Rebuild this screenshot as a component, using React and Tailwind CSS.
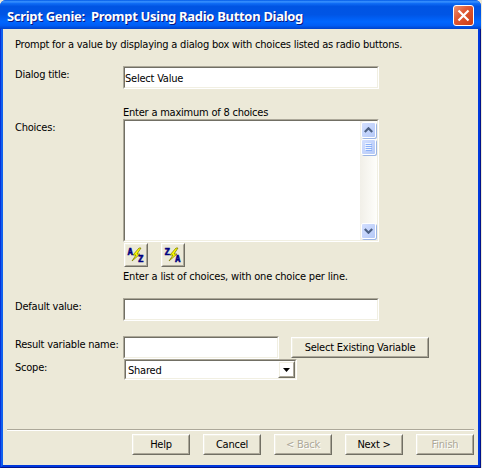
import React from 'react';

const sunken = 'border border-t-[#aca899] border-l-[#aca899] border-r-white border-b-white';
const sunkenInner = 'h-full w-full bg-white border border-t-[#716f64] border-l-[#716f64] border-r-[#f1efe2] border-b-[#f1efe2]';

function Field({ className, children }) {
  return (
    <div className={`${sunken} ${className}`}>
      <div className={`${sunkenInner} flex items-center`}>{children}</div>
    </div>
  );
}

function Button({ className, disabled, children }) {
  return (
    <button className={`border border-t-white border-l-white border-r-[#716f64] border-b-[#716f64] ${className}`}>
      <span className={`flex h-full w-full items-center justify-center border border-t-[#f1efe2] border-l-[#f1efe2] border-r-[#aca899] border-b-[#aca899] whitespace-pre ${disabled ? 'text-[#aca899] [text-shadow:1px_1px_0_#fff]' : ''}`}>
        {children}
      </span>
    </button>
  );
}

function SortIcon({ first, second }) {
  return (
    <svg width="20" height="20" viewBox="0 0 20 20">
      <path d="M13 3 L7 10 H10 L6 16 L14 9 H11 L15 3 Z" fill="#ffff00" stroke="#808000" strokeWidth="0.8" />
      <text x="1.5" y="9.5" fontSize="9" fontWeight="bold" fontFamily="DejaVu Sans Mono" fill="#000080" stroke="#000080" strokeWidth="0.5">{first}</text>
      <text x="12" y="17" fontSize="9" fontWeight="bold" fontFamily="DejaVu Sans Mono" fill="#000080" stroke="#000080" strokeWidth="0.5">{second}</text>
    </svg>
  );
}

function ScrollButton({ children, className }) {
  return (
    <div className={`w-[15px] shrink-0 rounded-[2px] border border-white bg-gradient-to-br from-[#d3dfff] to-[#b5c9f7] shadow-[1px_1px_0_#9cb5e4] flex items-center justify-center ${className}`}>
      {children}
    </div>
  );
}

export default function App() {
  return (
    <div className="flex h-[468px] w-[482px] bg-[#ece9d8] font-['DejaVu_Sans_Condensed','DejaVu_Sans',sans-serif] text-[11px] leading-[15px] tracking-[-0.22px] text-black [font-stretch:condensed]">
      <div className="flex w-[481px] flex-col overflow-hidden rounded-t-[6px] bg-[#0a3fdc]">
        <header className="flex h-[29px] shrink-0 items-center justify-between bg-[linear-gradient(180deg,#0058e6_0%,#3a93ff_6%,#0f6cf5_12%,#0054e3_22%,#0055e5_50%,#0066ff_75%,#005df5_88%,#0042c9_100%)] pl-[7px] pr-[7px] pt-[2px]">
          <span className="whitespace-pre pt-px font-['Noto_Sans',sans-serif] text-[13px] font-bold tracking-[-0.3px] text-white [font-stretch:normal] [text-shadow:1px_1px_0_#0a1883]">Script Genie:  Prompt Using Radio Button Dialog</span>
          <svg width="21" height="21" viewBox="0 0 21 21">
            <defs>
              <linearGradient id="close" x1="0" y1="0" x2="1" y2="1">
                <stop offset="0" stopColor="#ee9678" />
                <stop offset="0.4" stopColor="#e05a35" />
                <stop offset="1" stopColor="#c93a12" />
              </linearGradient>
            </defs>
            <rect x="0.5" y="0.5" width="20" height="20" rx="2.5" fill="url(#close)" stroke="#fff" />
            <path d="M5.5 5.5 L15.5 15.5 M15.5 5.5 L5.5 15.5" stroke="#fff" strokeWidth="2.2" />
          </svg>
        </header>
        <div className="flex min-h-0 flex-1 border-x border-b border-l-[#0831d9] border-r-[#00138c] border-b-[#00138c]">
          <div className="flex flex-1 border-x-2 border-b-2 border-l-[#0f60ee] border-r-[#0038dc] border-b-[#0038dc]">
            <main className="flex w-[475px] flex-col bg-[#ece9d8] pl-3">
              <p className="mt-[8px] whitespace-nowrap">Prompt for a value by displaying a dialog box with choices listed as radio buttons.</p>
              <div className="mt-[14px] flex h-[23px]">
                <label className="w-[108px] pt-px">Dialog title:</label>
                <Field className="h-[23px] w-[256px]"><span className="pt-px">Select Value</span></Field>
              </div>
              <div className="mt-[15px] flex">
                <label className="w-[108px] pt-[16px]">Choices:</label>
                <div>
                  <div className="h-[15px] leading-[17px]">Enter a maximum of 8 choices</div>
                  <Field className="h-[123px] w-[256px]">
                    <div className="ml-auto flex h-full w-[17px] flex-col items-center bg-gradient-to-r from-[#f1efe8] to-[#fefefb] py-px">
                      <ScrollButton className="h-[16px]">
                        <svg width="9" height="6" viewBox="0 0 9 6"><path d="M0.8 5 L4.5 1.3 L8.2 5" fill="none" stroke="#4d6185" strokeWidth="2.2" /></svg>
                      </ScrollButton>
                      <ScrollButton className="mt-px h-[16px]">
                        <svg width="7" height="8" viewBox="0 0 7 8"><path d="M0 .5H6M0 2.5H6M0 4.5H6M0 6.5H6" stroke="#eef4fe" /><path d="M1 1.5H7M1 3.5H7M1 5.5H7M1 7.5H7" stroke="#8cb0f8" /></svg>
                      </ScrollButton>
                      <ScrollButton className="mt-auto h-[16px]">
                        <svg width="9" height="6" viewBox="0 0 9 6"><path d="M0.8 1 L4.5 4.7 L8.2 1" fill="none" stroke="#4d6185" strokeWidth="2.2" /></svg>
                      </ScrollButton>
                    </div>
                  </Field>
                  <div className="mt-px flex gap-[13px] pl-px">
                    <Button className="h-[24px] w-[24px]"><SortIcon first="A" second="Z" /></Button>
                    <Button className="h-[24px] w-[24px]"><SortIcon first="Z" second="A" /></Button>
                  </div>
                  <div className="mt-px h-[15px] whitespace-nowrap leading-[17px] tracking-[-0.19px]">Enter a list of choices, with one choice per line.</div>
                </div>
              </div>
              <div className="mt-[15px] flex h-[23px]">
                <label className="w-[108px] pt-px">Default value:</label>
                <Field className="h-[23px] w-[256px]" />
              </div>
              <div className="mt-[15px] flex h-[23px]">
                <label className="w-[108px] whitespace-nowrap pt-px">Result variable name:</label>
                <Field className="h-[23px] w-[156px]" />
                <Button className="ml-[12px] mt-px h-[21px] w-[138px]">Select Existing Variable</Button>
              </div>
              <div className="flex h-[21px]">
                <label className="w-[109px] pt-px">Scope:</label>
                <Field className="h-[21px] w-[173px]">
                  <span className="ml-[2px] flex-1 pt-[2px]">Shared</span>
                  <Button className="h-[17px] w-[17px]">
                    <svg width="7" height="4" viewBox="0 0 7 4"><path d="M0 0H7L3.5 4Z" /></svg>
                  </Button>
                </Field>
              </div>
              <footer className="mr-[4px] -ml-[8px] mt-auto flex h-[36px] justify-end gap-[13px] border-t border-[#aca899] pt-[4px] shadow-[inset_0_1px_0_#fff]">
                <Button className="h-[21px] w-[58px]">Help</Button>
                <Button className="h-[21px] w-[58px]">Cancel</Button>
                <Button className="h-[21px] w-[58px]" disabled>{'< Back'}</Button>
                <Button className="h-[21px] w-[58px]">{'Next >'}</Button>
                <Button className="h-[21px] w-[58px]" disabled>Finish</Button>
              </footer>
            </main>
          </div>
        </div>
      </div>
    </div>
  );
}
